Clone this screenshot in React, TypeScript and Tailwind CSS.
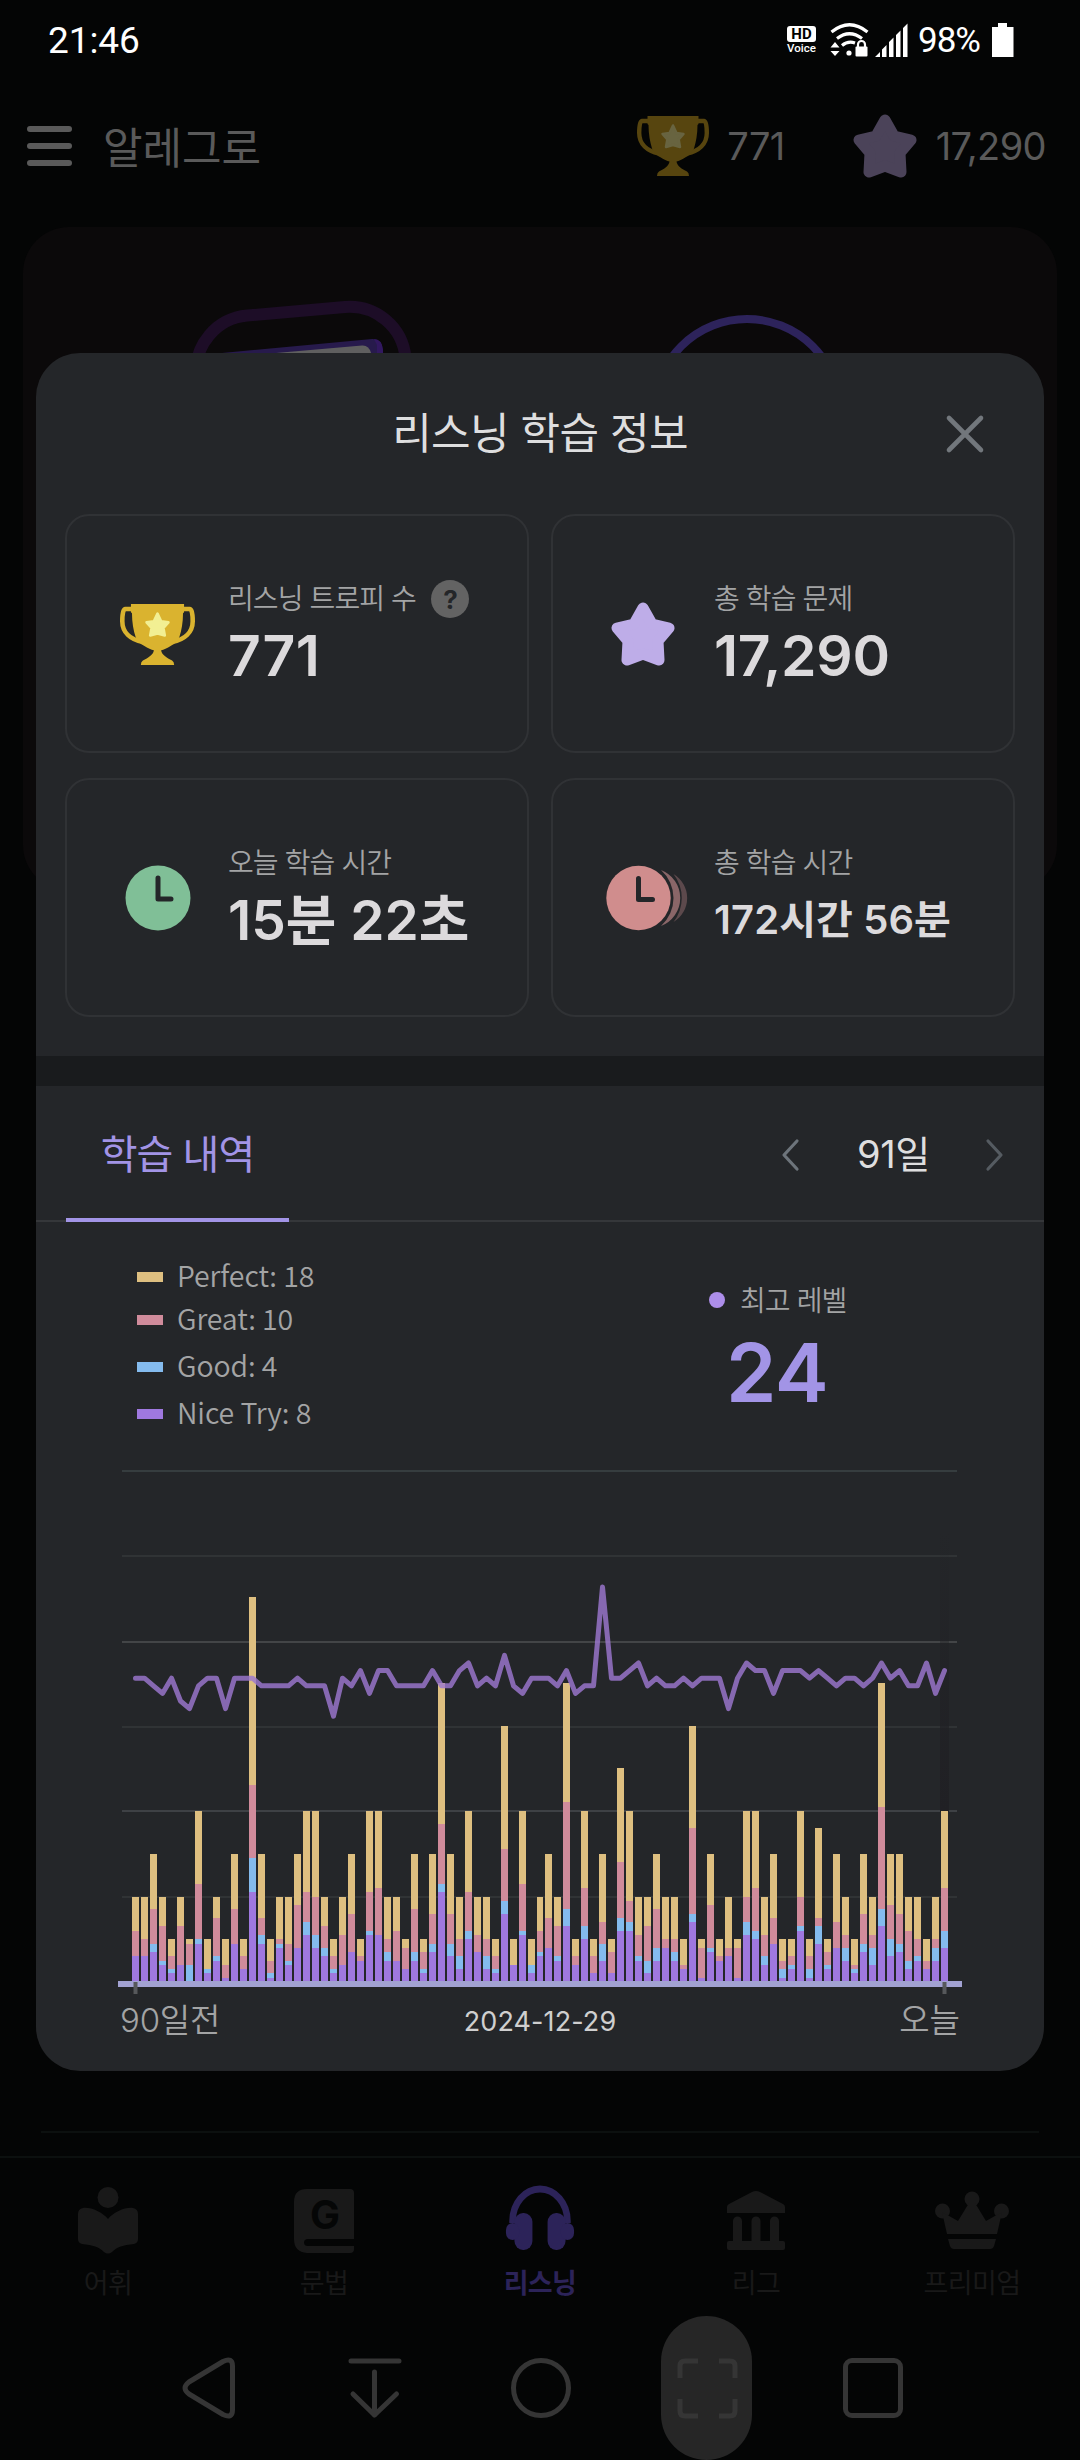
import React from "react";

/** Running totals per day: nice try, + good, + great, + perfect. */
const DAYS: number[][] = [
  [6, 6, 12, 20], [6, 6, 10, 20], [7, 9, 17, 30], [4, 5, 13, 20], [2, 3, 6, 10],
  [4, 4, 13, 20], [0, 4, 9, 10], [9, 10, 23, 40], [2, 3, 3, 10], [5, 6, 15, 20],
  [1, 1, 4, 10], [9, 9, 17, 30], [3, 3, 6, 10], [21, 29, 46, 90], [9, 11, 15, 30],
  [1, 2, 5, 10], [8, 9, 10, 20], [4, 5, 9, 20], [8, 8, 18, 30], [11, 14, 21, 40],
  [8, 11, 20, 40], [6, 8, 13, 20], [2, 3, 6, 10], [4, 4, 11, 20], [7, 7, 16, 30],
  [5, 5, 6, 10], [11, 12, 21, 40], [11, 11, 22, 40], [5, 7, 10, 20], [5, 5, 12, 20],
  [3, 3, 8, 10], [5, 7, 17, 30], [2, 3, 7, 10], [7, 9, 16, 30], [21, 23, 37, 70],
  [6, 9, 16, 30], [3, 6, 10, 20], [10, 12, 21, 40], [7, 7, 11, 20], [3, 6, 10, 20],
  [2, 3, 6, 10], [16, 19, 31, 60], [4, 4, 4, 10], [11, 12, 23, 40], [2, 4, 4, 10],
  [6, 7, 12, 20], [8, 8, 15, 30], [5, 6, 13, 20], [13, 17, 42, 70], [4, 4, 6, 10],
  [10, 13, 22, 40], [2, 2, 6, 10], [5, 9, 14, 30], [2, 2, 7, 10], [12, 15, 28, 50],
  [12, 14, 19, 40], [5, 6, 11, 20], [2, 5, 13, 20], [5, 8, 17, 30], [8, 8, 10, 20],
  [5, 7, 10, 20], [3, 3, 4, 10], [14, 16, 36, 60], [1, 1, 8, 10], [7, 8, 18, 30],
  [5, 5, 6, 10], [6, 6, 8, 20], [1, 1, 8, 10], [11, 14, 20, 40], [10, 12, 22, 40],
  [4, 6, 11, 20], [9, 9, 15, 30], [1, 3, 5, 10], [3, 4, 6, 10], [12, 13, 20, 40],
  [1, 3, 6, 10], [9, 13, 15, 36], [3, 4, 7, 10], [8, 8, 14, 30], [5, 8, 11, 20],
  [2, 3, 4, 10], [7, 9, 16, 30], [4, 8, 11, 20], [13, 17, 41, 70], [6, 10, 18, 30],
  [7, 9, 16, 30], [3, 5, 12, 20], [5, 6, 10, 20], [3, 3, 5, 10], [5, 8, 10, 20],
  [8, 12, 22, 40],
];

/** Level curve, one value per day, relative to the resting level. */
const LEVELS: number[] = [
  0, 0, -1, -2, 0, -3, -4, -1, 0, 0, -4, 0, 0, 0, -1, -1, -1, -1, 0, -1,
  -1, -1, -5, 0, -1, 1, -2, 1, 1, -1, -1, -1, -1, 1, -1, -1, 1, 2, -1, 0,
  -1, 3, -1, -2, 0, 0, 0, -1, 1, -2, -1, -1, 12, 0, 0, 1, 2, -1, 0, -1,
  -1, 0, -1, 0, 0, 0, -4, 0, 2, 1, 1, -2, 1, 1, 1, 0, 1, 0, -1, 0,
  0, -1, 0, 2, 0, 1, -1, -1, 2, -2, 1,
];

const BAR_COLORS = ["#9f78df", "#84bbee", "#d08b9b", "#debf80"];

function Chart() {
  const left = 118;
  const top = 1460;
  const base = 1982 - top;
  const unit = 4.275;
  const barX = (i: number) => (i <= 45 ? 132 : 131) + i * 9 - left;
  const grid = [
    [1470, "#363d3f"], [1555, "#303335"], [1641, "#434547"],
    [1726, "#303335"], [1810, "#3e4145"], [1896, "#303335"],
  ] as const;
  const points = LEVELS.map((l, i) => `${barX(i) + 3.5},${1678.2 - top - l * 7.6}`).join(" ");
  return (
    <svg width="844" height="540" viewBox="0 0 844 540" className="block">
      <defs>
        <linearGradient id="today" x1="0" y1="0" x2="0" y2="1">
          <stop offset="0" stopColor="#202024" stopOpacity="0" />
          <stop offset="1" stopColor="#202024" />
        </linearGradient>
      </defs>
      {grid.map(([y, c]) => (
        <rect key={y} x="4" y={y - top} width="835" height="2" fill={c} />
      ))}
      <rect x="822" y="70" width="9" height="282" fill="url(#today)" />
      {DAYS.map((d, i) =>
        d.map((v, k) => {
          const from = k === 0 ? 0 : d[k - 1];
          if (v === from) return null;
          const y1 = Math.round(base - v * unit);
          const y0 = Math.round(base - from * unit);
          return (
            <rect key={`${i}-${k}`} x={barX(i)} y={y1} width={i === 45 ? 6 : 7} height={y0 - y1} fill={BAR_COLORS[k]} />
          );
        }),
      )}
      <polyline points={points} fill="none" stroke="#9c78d0" strokeOpacity="0.82" strokeWidth="5" strokeLinejoin="round" strokeLinecap="round" />
      <rect x="0" y="521" width="844" height="6" fill="#a2a2d2" />
      <rect x="15.5" y="522" width="4" height="12" fill="#56585b" />
      <rect x="824.5" y="522" width="4" height="12" fill="#56585b" />
    </svg>
  );
}

function Trophy({ w, h, cup, star }: { w: number; h: number; cup: string; star: string }) {
  return (
    <svg width={w} height={h} viewBox="0 0 72 60" preserveAspectRatio="none" className="block shrink-0">
      <path d="M13 5H5C3 5 2.200 10 2.200 17C2.200 28 10 35 22 37.500M59 5H67C69 5 69.800 10 69.800 17C69.800 28 62 35 50 37.500" fill="none" stroke={cup} strokeWidth="4.400" />
      <path d="M10.500 0H61.500V8L60.500 9C60.500 18 59 26 57 32.500C54 38 52 39.500 49 41C45 43.500 42 45 39.500 45.500C40 50 45 53 50 55.500Q52 56.500 52 60H20Q20 56.500 22 55.500C27 53 32 50 32.500 45.500C30 45 27 43.500 23 41C20 39.500 18 38 15 32.500C13 26 11.500 18 11.500 9L10.500 8Z" fill={cup} />
      <path d="M36 9.500L39.500 17L46.500 18L41.700 23.500L43 31L36 29L29 31L30.300 23.500L25.500 18L32.500 17Z" fill={star} stroke={star} strokeWidth="2.500" strokeLinejoin="round" />
    </svg>
  );
}

function Star({ size, color }: { size: number; color: string }) {
  return (
    <svg width={size} height={size} viewBox="0 0 64 64" className="block shrink-0">
      <path d="M32 6L41 22L58 26L47 39L48 58L32 52L16 58L17 39L6 26L23 22Z" fill={color} stroke={color} strokeWidth="11" strokeLinejoin="round" />
    </svg>
  );
}

function GreenClock() {
  return (
    <svg width="66" height="66" viewBox="0 0 66 66" className="block">
      <circle cx="33" cy="33" r="32.500" fill="#80bf97" />
      <path d="M33 13V34H46" fill="none" stroke="#242629" strokeWidth="5" strokeLinecap="round" strokeLinejoin="round" />
    </svg>
  );
}

function RedClock() {
  return (
    <svg width="82" height="66" viewBox="0 0 82 66" className="block">
      <circle cx="32.500" cy="33" r="32.200" fill="#d08d8d" />
      <path d="M55 5A30 30 0 0 1 55 61A37.600 37.600 0 0 0 55 5Z" fill="#8a6668" />
      <path d="M67.500 9A27.900 27.900 0 0 1 67.500 57A39 39 0 0 0 67.500 9Z" fill="#5c494c" />
      <path d="M32.500 13.500V34.500H46.500" fill="none" stroke="#242629" strokeWidth="5" strokeLinecap="round" strokeLinejoin="round" />
    </svg>
  );
}

function StatCard({ icon, label, help, children }: { icon: React.ReactNode; label: string; help?: boolean; children: React.ReactNode }) {
  return (
    <div className="flex h-[239px] w-[464px] items-start rounded-[24px] border-2 border-[#303235] pt-[60px]">
      <div className="flex h-[116px] w-[161px] shrink-0 items-center justify-start pl-[53px]">{icon}</div>
      <div className="flex flex-col whitespace-nowrap">
        <div className="flex h-[46px] items-center gap-[15px] text-[28px] font-[350] tracking-[-0.900px] text-[#a3a4a5]">
          <span>{label}</span>
          {help && (
            <span className="flex size-[38px] items-center justify-center rounded-full bg-[#636363] text-[26px] font-bold text-[#242629]">?</span>
          )}
        </div>
        <div className="flex h-[68px] items-center font-semibold text-[#dcdadc]">{children}</div>
      </div>
    </div>
  );
}

function StatusBar() {
  return (
    <div className="flex h-[80px] items-center justify-between pr-[66px] pl-[48px] font-['Roboto',sans-serif] text-white">
      <span className="pt-[2px] text-[37px] tracking-[-0.1px]">21:46</span>
      <div className="flex items-center">
        <div className="mr-[14px] flex w-[29px] flex-col items-center">
          <span className="flex h-[16px] w-[29px] items-center justify-center rounded-[3px] bg-white text-[15px] leading-none font-bold text-black">HD</span>
          <span className="mt-px text-[11.500px] leading-[11px] font-medium">Voice</span>
        </div>
        <svg width="40" height="34" viewBox="0 0 40 34" className="mr-[5px]">
          <path d="M1.500 9Q19.500 -5.500 37.500 9" fill="none" stroke="#fff" strokeWidth="3.200" />
          <path d="M7 15.500Q19.500 6 32 15.500" fill="none" stroke="#fff" strokeWidth="3.200" />
          <path d="M12 22.500Q18 17.500 25 20" fill="none" stroke="#fff" strokeWidth="3.200" />
          <circle cx="19" cy="30" r="2.600" fill="#fff" />
          <path d="M5 19L9.500 24.500H.5ZM5 33L9.500 28H.5Z" fill="#fff" />
          <rect x="25.500" y="23.500" width="12" height="10" rx="1" fill="#fff" />
          <path d="M28 24V21.500A3.500 3.500 0 0 1 35 21.500V24" fill="none" stroke="#fff" strokeWidth="2.200" />
        </svg>
        <svg width="33" height="34" viewBox="0 0 33 34" className="mr-[10px]">
          <path d="M0 34L5 29V34ZM7 34V26.500L11.500 22V34ZM14 34V19L18.500 14.500V34ZM21 34V12L25.500 7.500V34ZM28 34V5L32.500 .5V34Z" fill="#fff" />
        </svg>
        <span className="pt-[2px] text-[35px] tracking-[-1px]">98%</span>
        <svg width="22" height="34" viewBox="0 0 22 34" className="ml-[12px]">
          <path d="M6 0H15V4H21.500V34H0V4H6Z" fill="#fff" />
        </svg>
      </div>
    </div>
  );
}

function Header() {
  return (
    <header className="flex h-[132px] items-center justify-between pr-[34px] pl-[27px] text-[#5a5a5a]">
      <div className="flex items-center">
        <div className="flex w-[45px] flex-col gap-[11px]">
          <span className="h-[6px] rounded-full bg-[#5a5a5a]" />
          <span className="h-[6px] rounded-full bg-[#5a5a5a]" />
          <span className="h-[6px] rounded-full bg-[#5a5a5a]" />
        </div>
        <span className="ml-[31px] pt-[4px] text-[43px] tracking-[-0.1px]">알레그로</span>
      </div>
      <div className="flex items-center text-[38px] tracking-[-0.6px]">
        <Trophy w={72} h={60} cup="#57450f" star="#686440" />
        <span className="ml-[18px]">771</span>
        <div className="ml-[68px]"><Star size={64} color="#4b4359" /></div>
        <span className="ml-[19px]">17,290</span>
      </div>
    </header>
  );
}

const TABS = ["어휘", "문법", "리스닝", "리그", "프리미엄"];

function TabIcon({ index }: { index: number }) {
  const c = "#191919";
  switch (index) {
    case 0:
      return (
        <svg width="62" height="72" viewBox="0 0 62 72">
          <circle cx="31" cy="12.500" r="10.500" fill={c} />
          <path d="M31 34C25 27 14 22 6 23Q1 24 1 29V54Q1 58 5 59C16 60 22 62 27 67Q31 70 35 67C40 62 46 60 57 59Q61 58 61 54V29Q61 24 56 23C48 22 37 27 31 34Z" fill={c} />
        </svg>
      );
    case 1:
      return (
        <svg width="62" height="72" viewBox="0 0 62 72">
          <path d="M14 4H57Q61 4 61 8V54H15Q11 54 11 57.500T15 61H61V64Q61 68 57 68H14Q1 67 1 54V17Q1 4 14 4Z" fill={c} />
          <text x="32" y="44" textAnchor="middle" fontSize="40" fontWeight="700" fontFamily="Inter, sans-serif" fill="#050606">G</text>
        </svg>
      );
    case 2:
      return (
        <svg width="70" height="72" viewBox="0 0 74 72" preserveAspectRatio="none">
          <path d="M8 38V36A28 31 0 0 1 66 36V38" fill="none" stroke="#2c2359" strokeWidth="7" />
          <rect x="10" y="28" width="19" height="37" rx="9" fill="#2c2359" />
          <rect x="45" y="28" width="19" height="37" rx="9" fill="#2c2359" />
          <rect x="1" y="38" width="14" height="17" rx="7" fill="#2c2359" />
          <rect x="59" y="38" width="14" height="17" rx="7" fill="#2c2359" />
        </svg>
      );
    case 3:
      return (
        <svg width="60" height="72" viewBox="0 0 60 72">
          <path d="M1 22Q1 20 3 19L26 7Q30 5 34 7L57 19Q59 20 59 22V28H1Z" fill={c} />
          <path d="M7 60V36A4.500 4.500 0 0 1 16 36V57H25.500V36A4.500 4.500 0 0 1 34.500 36V57H44V36A4.500 4.500 0 0 1 53 36V60Z" fill={c} />
          <rect x="1" y="56" width="58" height="9" rx="2" fill={c} />
        </svg>
      );
    default:
      return (
        <svg width="76" height="72" viewBox="0 0 76 72">
          <circle cx="38" cy="14" r="7.500" fill={c} />
          <circle cx="8.500" cy="26" r="7.500" fill={c} />
          <circle cx="67.500" cy="26" r="7.500" fill={c} />
          <path d="M8 27L24 36L35 18H41L52 36L68 27L63 49H13Z" fill={c} />
          <path d="M14 54H62L60 61Q59 64 56 64H20Q17 64 16 61Z" fill={c} />
        </svg>
      );
  }
}

function SystemNav() {
  return (
    <div className="flex h-[144px] items-center pl-[181px]">
      <svg width="56" height="62" viewBox="0 0 56 62" fill="none" stroke="#353535" strokeWidth="5" strokeLinejoin="round">
        <path d="M42 4.500Q51.500 0 51.500 9V53Q51.500 62 42 57.500L8 37Q0 31 8 25Z" />
      </svg>
      <svg width="54" height="62" viewBox="0 0 54 62" fill="none" stroke="#353535" strokeWidth="5" strokeLinecap="round" strokeLinejoin="round" className="ml-[111px]">
        <path d="M3 4H51M26.500 15V58M5 37L26.500 58L48.500 37" />
      </svg>
      <svg width="62" height="62" viewBox="0 0 62 62" fill="none" stroke="#353535" strokeWidth="5" className="ml-[108px]">
        <circle cx="31" cy="31" r="27.500" />
      </svg>
      <div className="ml-[89px] flex h-[144px] w-[91px] items-center justify-center rounded-full bg-[#262626]">
        <svg width="62" height="62" viewBox="0 0 62 62" fill="none" stroke="#353535" strokeWidth="5">
          <path d="M22 4H9Q4 4 4 9V21M43 4H54Q59 4 59 9V21M22 59H9Q4 59 4 54V42M43 59H54Q59 59 59 54V42" />
        </svg>
      </div>
      <span className="ml-[91px] h-[60px] w-[60px] rounded-[9px] border-[5px] border-[#353535]" />
    </div>
  );
}

function Modal() {
  const legend = [
    ["bg-[#debf80]", "Perfect: 18", "h-[43px]"],
    ["bg-[#d08b9b]", "Great: 10", "h-[43px]"],
    ["bg-[#84bbee]", "Good: 4", "h-[52px]"],
    ["bg-[#9f78df]", "Nice Try: 8", "h-[42px]"],
  ];
  return (
    <section className="absolute top-[353px] left-[36px] h-[1718px] w-[1008px] overflow-hidden rounded-[44px] bg-[#242629]">
      <div className="relative flex h-[161px] items-center justify-center text-[43px] tracking-[-0.6px] text-[#dededf]">
        <span>리스닝 학습 정보</span>
        <svg width="40" height="40" viewBox="0 0 40 40" className="absolute top-[61px] right-[59px]">
          <path d="M4 4L36 36M36 4L4 36" stroke="#72777c" strokeWidth="4.600" strokeLinecap="round" />
        </svg>
      </div>
      <div className="grid h-[542px] grid-cols-[464px_464px] content-start gap-x-[22px] gap-y-[25px] pl-[29px]">
        <StatCard icon={<Trophy w={75} h={61} cup="#dab32f" star="#f2ef93" />} label="리스닝 트로피 수" help>
          <span className="text-[57px] tracking-[0.5px]">771</span>
        </StatCard>
        <StatCard icon={<div className="pl-[5px]"><Star size={64} color="#beade8" /></div>} label="총 학습 문제">
          <span className="text-[57px] tracking-[-0.3px]">17,290</span>
        </StatCard>
        <StatCard icon={<div className="pl-[5px]"><GreenClock /></div>} label="오늘 학습 시간">
          <span className="text-[55px]">15분 22초</span>
        </StatCard>
        <StatCard icon={<RedClock />} label="총 학습 시간">
          <span className="text-[40px] tracking-[0.100px]">172시간 56분</span>
        </StatCard>
      </div>
      <div className="h-[30px] bg-[#191b1d]" />
      <div className="flex h-[136px] items-stretch justify-between border-b-2 border-[#35373a] pr-[39px] pl-[30px]">
        <div className="-mb-[2px] flex w-[223px] items-center justify-center border-b-4 border-[#a294e6] pt-[6px] text-[40px] tracking-[-1px] text-[#a294e6]">
          학습 내역
        </div>
        <div className="flex items-center pt-[3px] text-[38px] tracking-[-0.3px] text-[#dededf]">
          <svg width="20" height="34" viewBox="0 0 20 34"><path d="M17 3L4 17L17 31" fill="none" stroke="#6d747b" strokeWidth="3.200" strokeLinecap="round" strokeLinejoin="round" /></svg>
          <span className="mr-[55px] ml-[57px]">91일</span>
          <svg width="20" height="34" viewBox="0 0 20 34"><path d="M3 3L16 17L3 31" fill="none" stroke="#555b61" strokeWidth="3.200" strokeLinecap="round" strokeLinejoin="round" /></svg>
        </div>
      </div>
      <div className="flex h-[238px] items-start">
        <ul className="mt-[33px] ml-[101px] w-[494px] font-['Noto_Sans_CJK_KR',sans-serif] text-[28.500px] font-[350] tracking-[-0.1px] text-[#a3a4a5]">
          {legend.map(([swatch, text, height]) => (
            <li key={text} className={`flex items-center gap-[14px] ${height}`}>
              <span className={`h-[10px] w-[26px] ${swatch}`} />
              <span className="-mt-[3px]">{text}</span>
            </li>
          ))}
        </ul>
        <div className="mt-[55px] flex flex-col">
          <div className="flex h-[46px] items-center gap-[15px] pl-[78px] text-[28px] font-[350] tracking-[-0.9px] text-[#a3a4a5]">
            <span className="size-[16px] rounded-full bg-[#ad8eea]" />
            <span className="pt-[2px]">최고 레벨</span>
          </div>
          <span className="pl-[95px] text-[81px] leading-[100px] font-semibold tracking-[-0.5px] text-[#a294e6]">24</span>
        </div>
      </div>
      <div className="pl-[82px]"><Chart /></div>
      <div className="-mt-[7px] flex h-[56px] items-center justify-between pr-[84px] pl-[84px] text-[#a3a4a5]">
        <span className="w-[150px] text-[33px] font-[350] tracking-[-0.2px]">90일전</span>
        <span className="pt-[3px] text-[27px] tracking-[0.1px] text-[#cfcfcf]">2024-12-29</span>
        <span className="w-[150px] text-right text-[33px] font-[350]">오늘</span>
      </div>
    </section>
  );
}

export default function App() {
  return (
    <main className="relative flex h-[2460px] w-[1080px] flex-col overflow-hidden bg-[#040505] font-['Inter','Noto_Sans_CJK_KR',sans-serif]">
      <StatusBar />
      <Header />
      <div className="mx-[23px] mt-[15px] h-[664px] shrink-0 overflow-hidden rounded-[46px] bg-[#0b090a]">
        <svg width="1034" height="140" viewBox="23 227 1034 140">
          <rect x="200" y="311" width="210" height="205" rx="56" fill="none" stroke="#1d0d27" strokeWidth="12" transform="rotate(-5 304 414)" />
          <path d="M222 353L372 339Q382 338.500 383 350V370H222Z" fill="#271a4c" />
          <path d="M374 339Q382 339 383 350V370H377V345Z" fill="#321860" />
          <path d="M276 353L362 345.500Q369 345 371 353V370H276Z" fill="#5f5f5f" />
          <circle cx="747" cy="412" r="93" fill="none" stroke="#2d235b" strokeWidth="8" />
        </svg>
      </div>
      <div className="mx-[41px] mt-[1240px] h-[2px] shrink-0 bg-[#0c100f]" />
      <nav className="mt-[23px] grid h-[160px] shrink-0 grid-cols-5 border-t-2 border-[#0c100f] pt-[27px]">
        {TABS.map((t, i) => (
          <div key={t} className="flex flex-col items-center">
            <TabIcon index={i} />
            <span className={i === 2 ? "mt-[7px] text-[27px] leading-[40px] font-bold tracking-[-0.6px] text-[#2c2359]" : "mt-[7px] text-[27px] leading-[40px] tracking-[-0.6px] text-[#191919]"}>
              {t}
            </span>
          </div>
        ))}
      </nav>
      <SystemNav />
      <Modal />
    </main>
  );
}
